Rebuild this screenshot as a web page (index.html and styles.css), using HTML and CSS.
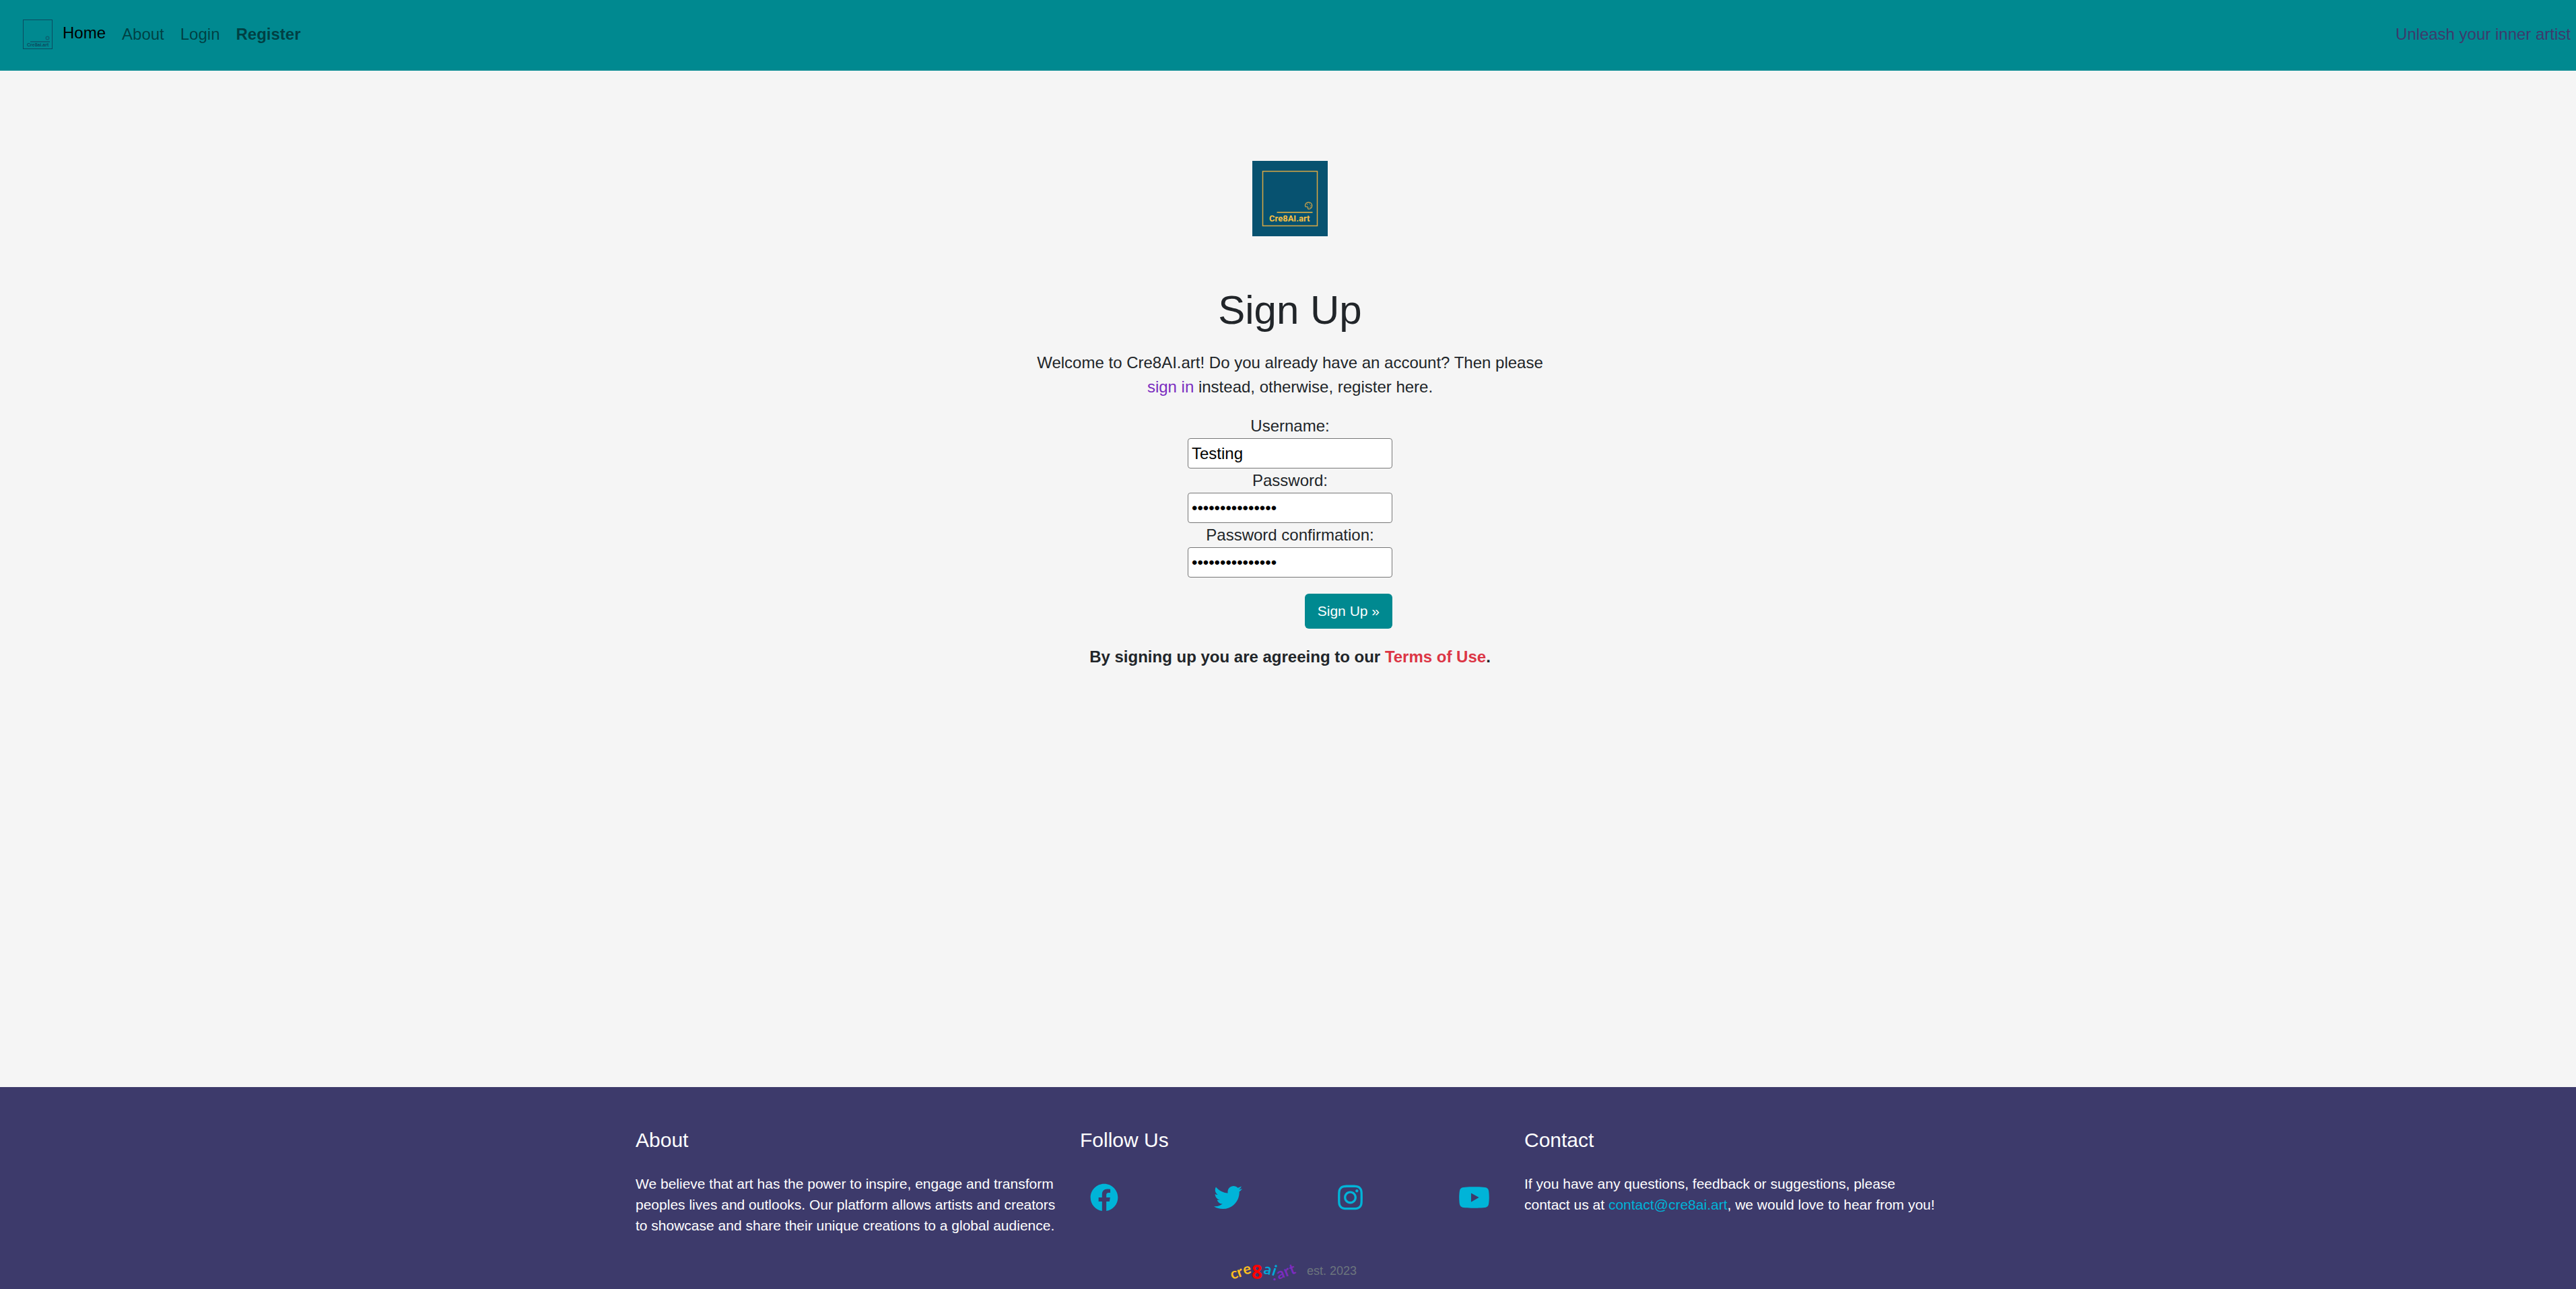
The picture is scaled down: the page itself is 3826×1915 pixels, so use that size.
FILE: index.html
```html
<!DOCTYPE html>
<html lang="en">
<head>
<meta charset="utf-8">
<meta name="viewport" content="width=device-width, initial-scale=1">
<title>Sign Up - Cre8AI.art</title>
<link rel="stylesheet" href="styles.css">
</head>
<body>
<header class="navbar">
  <a class="brand" href="#" aria-label="Cre8AI.art">
    <svg class="brand-logo" viewBox="0 0 44 44" width="44" height="44" aria-hidden="true">
      <rect x="0.5" y="0.5" width="43" height="43" fill="none" stroke="#0c4a60"/>
      <circle cx="36.5" cy="27.500" r="2.300" fill="none" stroke="#0a6474" stroke-width="1.400"/>
      <path d="M11 33h29" stroke="#0a6474" stroke-width="2"/>
      <text x="6" y="40" class="brand-text">Cre8ai.art</text>
    </svg>
  </a>
  <nav class="nav">
    <a class="nav-link active" href="#">Home</a>
    <a class="nav-link" href="#">About</a>
    <a class="nav-link" href="#">Login</a>
    <a class="nav-link strong" href="#">Register</a>
  </nav>
  <span class="tagline">Unleash your inner artist</span>
</header>

<main class="signup">
  <svg class="signup-logo" viewBox="0 0 112 112" width="112" height="112" role="img" aria-label="Cre8AI.art logo">
    <rect width="112" height="112" fill="#075270"/>
    <rect x="15.500" y="15.500" width="81" height="81" fill="none" stroke="#d9a843" stroke-width="1.500"/>
    <path d="M36.500 76.500h53" stroke="#f3b63f" stroke-width="1.500"/>
    <g fill="none" stroke="#c9a24a" stroke-width="1.300">
      <path d="M83.500 61.500c-3 0-5 2.300-5 4.700 0 1.800 1 2.300 2.300 2 1.500-.3 2.200.4 1.800 1.600-.4 1.300.2 1.900 1.200 1.900 2.800 0 4.900-2.400 4.900-5.200s-2.200-5-5.200-5z"/>
      <path d="M81 64.500h1M84.500 63.800h1M86.300 66.500h1M85.500 69h1"/>
    </g>
    <text x="25" y="90" class="logo-text">Cre8AI.art</text>
  </svg>
  <h1 class="title">Sign Up</h1>
  <p class="intro">Welcome to Cre8AI.art! Do you already have an account? Then please <a class="link-purple" href="#">sign in</a> instead, otherwise, register here.</p>
  <form class="form">
    <label for="username">Username:</label>
    <input id="username" type="text" value="Testing">
    <label for="password1">Password:</label>
    <input id="password1" type="password" value="abcdefghijklmno">
    <label for="password2">Password confirmation:</label>
    <input id="password2" type="password" value="abcdefghijklmno">
    <button class="btn" type="button">Sign Up »</button>
  </form>
  <p class="terms">By signing up you are agreeing to our <a class="link-red" href="#">Terms of Use</a>.</p>
</main>

<footer class="footer">
  <div class="columns">
    <section class="column">
      <h2 class="column-title">About</h2>
      <p>We believe that art has the power to inspire, engage and transform peoples lives and outlooks. Our platform allows artists and creators to showcase and share their unique creations to a global audience.</p>
    </section>
    <section class="column">
      <h2 class="column-title">Follow Us</h2>
      <div class="social">
        <a href="#" aria-label="Facebook"><svg viewBox="0 0 512 512" width="42" height="42"><path d="M504 256C504 119 393 8 256 8S8 119 8 256c0 123.780 90.690 226.380 209.250 245V327.690h-63V256h63v-54.640c0-62.150 37-96.480 93.670-96.480 27.140 0 55.520 4.840 55.520 4.840v61h-31.280c-30.800 0-40.410 19.120-40.410 38.730V256h68.780l-11 71.690h-57.780V501C413.310 482.380 504 379.780 504 256z"/></svg></a>
        <a href="#" aria-label="Twitter"><svg viewBox="0 0 512 512" width="42" height="42"><path d="M459.370 151.716c.325 4.548.325 9.097.325 13.645 0 138.720-105.583 298.558-298.558 298.558-59.452 0-114.680-17.219-161.137-47.106 8.447.974 16.568 1.299 25.340 1.299 49.055 0 94.213-16.568 130.274-44.832-46.132-.975-84.792-31.188-98.112-72.772 6.498.974 12.995 1.624 19.818 1.624 9.421 0 18.843-1.300 27.614-3.573-48.081-9.747-84.143-51.980-84.143-102.985v-1.299c13.969 7.797 30.214 12.670 47.431 13.319-28.264-18.843-46.781-51.005-46.781-87.391 0-19.492 5.197-37.360 14.294-52.954 51.655 63.675 129.300 105.258 216.365 109.807-1.624-7.797-2.599-15.918-2.599-24.040 0-57.828 46.782-104.934 104.934-104.934 30.213 0 57.502 12.670 76.670 33.137 23.715-4.548 46.456-13.320 66.599-25.340-7.798 24.366-24.366 44.833-46.132 57.827 21.117-2.273 41.584-8.122 60.426-16.243-14.292 20.791-32.161 39.308-52.628 54.253z"/></svg></a>
        <a href="#" aria-label="Instagram"><svg viewBox="0 0 448 512" width="37" height="42"><path d="M224.100 141c-63.600 0-114.900 51.300-114.900 114.900s51.300 114.900 114.900 114.900S339 319.500 339 255.900 287.700 141 224.100 141zm0 189.600c-41.100 0-74.700-33.500-74.700-74.700s33.500-74.700 74.700-74.700 74.700 33.500 74.700 74.700-33.600 74.700-74.700 74.700zm146.400-194.300c0 14.900-12 26.800-26.800 26.800-14.900 0-26.800-12-26.800-26.800s12-26.800 26.800-26.800 26.800 12 26.800 26.800zm76.100 27.200c-1.700-35.900-9.900-67.700-36.200-93.900-26.200-26.200-58-34.400-93.900-36.200-37-2.100-147.900-2.100-184.900 0-35.800 1.700-67.600 9.900-93.900 36.100s-34.400 58-36.200 93.900c-2.100 37-2.100 147.900 0 184.900 1.700 35.900 9.900 67.700 36.200 93.900s58 34.400 93.900 36.200c37 2.100 147.900 2.100 184.900 0 35.900-1.700 67.700-9.900 93.900-36.200 26.200-26.200 34.400-58 36.200-93.900 2.100-37 2.100-147.800 0-184.800zM398.800 388c-7.800 19.600-22.900 34.700-42.600 42.600-29.500 11.700-99.500 9-132.100 9s-102.700 2.600-132.100-9c-19.600-7.800-34.700-22.900-42.600-42.600-11.700-29.500-9-99.500-9-132.100s-2.600-102.700 9-132.100c7.800-19.600 22.900-34.700 42.600-42.600 29.500-11.700 99.500-9 132.100-9s102.700-2.600 132.100 9c19.600 7.800 34.700 22.900 42.600 42.600 11.700 29.500 9 99.500 9 132.100s2.700 102.700-9 132.100z"/></svg></a>
        <a href="#" aria-label="YouTube"><svg viewBox="0 0 576 512" width="47" height="42"><path d="M549.655 124.083c-6.281-23.650-24.787-42.276-48.284-48.597C458.781 64 288 64 288 64S117.220 64 74.629 75.486c-23.497 6.322-42.003 24.947-48.284 48.597-11.412 42.867-11.412 132.305-11.412 132.305s0 89.438 11.412 132.305c6.281 23.650 24.787 41.500 48.284 47.821C117.220 448 288 448 288 448s170.780 0 213.371-11.486c23.497-6.321 42.003-24.171 48.284-47.821 11.412-42.867 11.412-132.305 11.412-132.305s0-89.438-11.412-132.305zm-317.510 213.508V175.185l142.739 81.205-142.739 81.201z"/></svg></a>
      </div>
    </section>
    <section class="column">
      <h2 class="column-title">Contact</h2>
      <p>If you have any questions, feedback or suggestions, please contact us at <a class="link-cyan" href="#">contact@cre8ai.art</a>, we would love to hear from you!</p>
    </section>
  </div>
  <div class="imprint">
    <svg class="wordmark" viewBox="0 0 100 32" width="100" height="32" role="img" aria-label="cre8ai.art">
      <g fill="#fcbf1e">
        <text transform="translate(3 29) rotate(-18)">c</text>
        <text transform="translate(13 26) rotate(-20)">r</text>
        <text transform="translate(21 22) rotate(-14)">e</text>
      </g>
      <text class="eight" x="32" y="28" fill="#ff0000">8</text>
      <g fill="#00a9d6">
        <text transform="translate(49 20) rotate(12)">a</text>
        <text transform="translate(61 22) rotate(18)">i</text>
      </g>
      <g fill="#7b2cbf">
        <text transform="translate(64 31) rotate(-20)">.</text>
        <text transform="translate(72 29) rotate(-20)">a</text>
        <text transform="translate(83 25) rotate(-22)">r</text>
        <text transform="translate(91 22) rotate(-20)">t</text>
      </g>
    </svg>
    <span>est. 2023</span>
  </div>
</footer>
</body>
</html>
```
FILE: styles.css
```css
* { box-sizing: border-box; }

body {
  margin: 0;
  min-height: 100vh;
  display: flex;
  flex-direction: column;
  background: #f5f5f5;
  color: #212529;
  font: 24px/36px "Liberation Sans", Arial, sans-serif;
}

a { text-decoration: none; }
p, h1, h2 { margin: 0; font-weight: 400; }
svg { display: block; }

.navbar {
  display: flex;
  align-items: center;
  min-height: 105px;
  padding: 0 8px 4px 34px;
  background: #008990;
}
.brand { margin-right: 15px; }
.brand-text { font: 700 7px "Liberation Sans", Arial, sans-serif; fill: #0c4a60; }
.nav { display: flex; align-items: center; gap: 24px; }
.nav-link { color: rgba(0, 0, 0, 0.55); }
.nav-link.active { color: #000; padding-bottom: 4px; }
.nav-link.strong { font-weight: 700; }
.tagline { margin-left: auto; color: #3d3a6c; }

.signup {
  flex: 1;
  display: flex;
  flex-direction: column;
  align-items: center;
  padding: 134px 0 48px 6px;
  text-align: center;
}
.logo-text { font: 700 13px Roboto, "Liberation Sans", sans-serif; fill: #f9c043; }
.title { margin: 74px 0 24px; font-size: 60px; line-height: 72px; }
.intro { max-width: 792px; margin-bottom: 22px; }
.link-purple { color: #7b2cbf; }
.link-red { color: #dc3545; }
.link-cyan { color: #00b4d8; }

.form { display: flex; flex-direction: column; width: 304px; }
.form input {
  height: 45px;
  padding: 0 5px;
  border: 1px solid #767676;
  border-radius: 4px;
  background: #fff;
  color: #000;
  font: inherit;
}
.btn {
  align-self: flex-end;
  height: 52px;
  margin: 24px 0;
  padding: 0 19px;
  border: 0;
  border-radius: 6px;
  background: #008990;
  color: #fff;
  font: 21px "Liberation Sans", Arial, sans-serif;
}
.terms { font-weight: 700; }

.footer {
  padding: 61px 0 11px 6px;
  background: #3d3a6b;
  color: #fff;
  font-size: 21px;
  line-height: 31px;
}
.columns {
  display: grid;
  grid-template-columns: repeat(3, 1fr);
  max-width: 1980px;
  margin: 0 auto;
}
.column { padding: 0 18px; }
.column-title { margin-bottom: 31px; font-size: 30px; line-height: 36px; }
.social { display: flex; justify-content: space-between; padding: 15px 15px 0; }
.social svg { fill: #00b4d8; }
.imprint {
  display: flex;
  justify-content: center;
  align-items: center;
  gap: 14px;
  margin-top: 36px;
  padding-left: 10px;
  color: #6c757d;
  font-size: 18px;
}
.wordmark { overflow: visible; font: 700 22px Lato, "Noto Sans", sans-serif; }
.wordmark .eight { font: 700 28px "Noto Sans", sans-serif; }
```
